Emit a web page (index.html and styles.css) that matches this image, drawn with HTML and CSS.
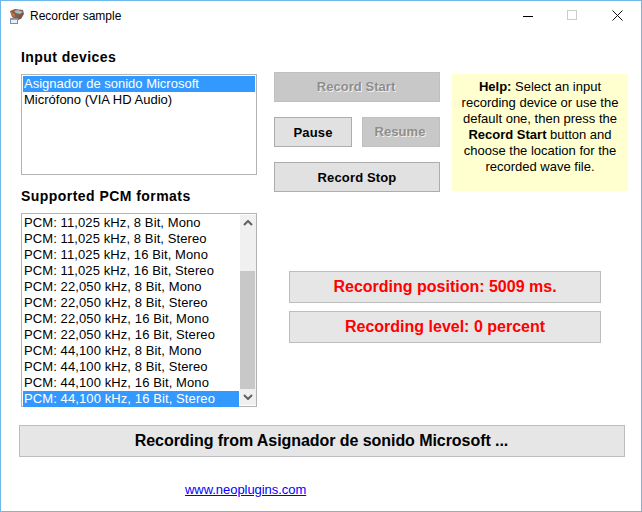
FILE: index.html
```html
<!DOCTYPE html>
<html lang="en">
<head>
<meta charset="utf-8">
<title>Recorder sample</title>
<link rel="stylesheet" href="styles.css">
</head>
<body>
<div class="window">
  <header class="titlebar">
    <svg class="app-icon" width="16" height="16" viewBox="0 0 16 16">
      <path d="M1 3l5-2 8 1 1 4-3 5-4 1-5-3z" fill="#8a5a44"/>
      <path d="M5 3l4-1 5 2-3 2-4-1z" fill="#9cc4c8"/>
      <path d="M1 3l5 3v3L3 8z" fill="#b5714a"/>
      <path d="M10 7l4-2-2 5-3 2z" fill="#6d5a55"/>
      <rect x="1.500" y="10.500" width="7" height="5" fill="#e8eef6" stroke="#7f8fa8"/>
      <rect x="2" y="11" width="6" height="1" fill="#8fa6c8"/>
    </svg>
    <span class="title">Recorder sample</span>
    <div class="controls">
      <span class="ctl"><svg width="10" height="10" viewBox="0 0 10 10"><path d="M0 5.500h10" stroke="#000" fill="none"/></svg></span>
      <span class="ctl"><svg width="11" height="11" viewBox="0 0 11 11"><rect x=".5" y=".5" width="9" height="9" stroke="#ccc" fill="none"/></svg></span>
      <span class="ctl"><svg width="11" height="11" viewBox="0 0 11 11"><path d="M.5.500l10 10M10.500.500l-10 10" stroke="#111" fill="none"/></svg></span>
    </div>
  </header>

  <main class="main">
    <section class="left">
      <h2 class="heading">Input devices</h2>
      <div class="listbox devices">
        <div class="item selected">Asignador de sonido Microsoft</div>
        <div class="item">Micrófono (VIA HD Audio)</div>
      </div>
      <h2 class="heading second">Supported PCM formats</h2>
      <div class="listbox formats">
        <div class="items">
          <div class="item">PCM: 11,025 kHz, 8 Bit, Mono</div>
          <div class="item">PCM: 11,025 kHz, 8 Bit, Stereo</div>
          <div class="item">PCM: 11,025 kHz, 16 Bit, Mono</div>
          <div class="item">PCM: 11,025 kHz, 16 Bit, Stereo</div>
          <div class="item">PCM: 22,050 kHz, 8 Bit, Mono</div>
          <div class="item">PCM: 22,050 kHz, 8 Bit, Stereo</div>
          <div class="item">PCM: 22,050 kHz, 16 Bit, Mono</div>
          <div class="item">PCM: 22,050 kHz, 16 Bit, Stereo</div>
          <div class="item">PCM: 44,100 kHz, 8 Bit, Mono</div>
          <div class="item">PCM: 44,100 kHz, 8 Bit, Stereo</div>
          <div class="item">PCM: 44,100 kHz, 16 Bit, Mono</div>
          <div class="item selected">PCM: 44,100 kHz, 16 Bit, Stereo</div>
        </div>
        <div class="scrollbar">
          <span class="arrow"><svg width="10" height="6" viewBox="0 0 10 6"><path d="M1 5l4-4 4 4" stroke="#606060" stroke-width="2" fill="none"/></svg></span>
          <span class="track"></span>
          <span class="thumb"></span>
          <span class="arrow"><svg width="10" height="6" viewBox="0 0 10 6"><path d="M1 1l4 4 4-4" stroke="#606060" stroke-width="2" fill="none"/></svg></span>
        </div>
      </div>
    </section>

    <section class="right">
      <div class="top">
        <div class="buttons">
          <button class="btn disabled" type="button">Record Start</button>
          <div class="btn-row">
            <button class="btn" type="button">Pause</button>
            <button class="btn disabled" type="button">Resume</button>
          </div>
          <button class="btn" type="button">Record Stop</button>
        </div>
        <aside class="help"><b>Help:</b> Select an input recording device or use the default one, then press the <b>Record Start</b> button and choose the location for the recorded wave file.</aside>
      </div>
      <div class="meters">
        <div class="panel meter">Recording position: 5009 ms.</div>
        <div class="panel meter">Recording level: 0 percent</div>
      </div>
    </section>
  </main>

  <div class="panel status">Recording from Asignador de sonido Microsoft ...</div>
  <footer class="footer"><a href="#">www.neoplugins.com</a></footer>
</div>
</body>
</html>
```
FILE: styles.css
```css
* { box-sizing: border-box; }
html, body { margin: 0; padding: 0; background: #fff; }
body { font-family: "Liberation Sans", Arial, sans-serif; color: #000; overflow: hidden; }

.window {
  width: 642px;
  height: 512px;
  border: 1px solid #6fb9ea;
  border-bottom-color: #7ab8e2;
  display: flex;
  flex-direction: column;
  background: #fff;
}

.titlebar {
  height: 29px;
  display: flex;
  align-items: center;
  padding-left: 8px;
  flex: none;
}
.app-icon { margin-right: 5px; }
.title { font-size: 12px; }
.controls { margin-left: auto; display: flex; margin-right: 1px; }
.ctl { width: 45px; display: flex; justify-content: center; align-items: center; height: 29px; }

.main { display: flex; padding-left: 20px; flex: none; }

.left { width: 236px; flex: none; }
.heading {
  font-size: 14px;
  font-weight: bold;
  letter-spacing: .45px;
  line-height: 16px;
  margin: 19px 0 9px;
}
.heading.second { margin: 13px 0 9px; }

.listbox {
  border: 1px solid #b4b4b4;
  font-size: 13px;
  background: #fff;
}
.devices { height: 101px; padding: 1px; }
.formats { height: 194px; padding: 1px 0 1px 1px; display: flex; letter-spacing: .1px; }
.items { flex: 1; min-width: 0; }
.item { height: 16px; line-height: 16px; padding-left: 1px; white-space: nowrap; }
.item.selected { background: #3399ff; color: #fff; }

.scrollbar {
  width: 16px;
  flex: none;
  display: flex;
  flex-direction: column;
  background: #f0f0f0;
  margin-left: 1px;
}
.arrow { height: 16px; display: flex; align-items: center; justify-content: center; flex: none; }
.track { height: 40px; flex: none; }
.thumb { flex: 1; background: #c8c8c8; margin-right: 1px; }

.right { margin-left: 17px; width: 354px; flex: none; padding-top: 42px; }
.top { display: flex; align-items: flex-start; }
.buttons { width: 166px; flex: none; display: flex; flex-direction: column; gap: 15px; }
.btn-row { display: flex; justify-content: space-between; }
.btn-row .btn { width: 78px; }
.btn {
  height: 30px;
  width: 100%;
  padding: 0;
  border: 1px solid #adadad;
  border-radius: 0;
  background: #e1e1e1;
  font-family: inherit;
  font-size: 13px;
  font-weight: bold;
  letter-spacing: .15px;
  color: #000;
}
.btn.disabled {
  padding: 0 2px 2px 0;
  background: #c8c8c8;
  border-color: #c0c0c0;
  color: #8e8e8e;
  letter-spacing: .05px;
  text-shadow: 1px 1px 0 #f0f0f0;
}
.help {
  width: 176px;
  height: 117px;
  margin: 2px 0 0 12px;
  padding: 5px 8px 0;
  background: #ffffd0;
  font-size: 13px;
  line-height: 16px;
  text-align: center;
}

.meters { margin: 79px 0 0 15px; width: 312px; display: flex; flex-direction: column; gap: 8px; }
.panel {
  border: 1px solid #bdbdbd;
  background: #e6e6e6;
  height: 32px;
  display: flex;
  align-items: center;
  justify-content: center;
  font-weight: bold;
}
.meter { color: #ff0000; font-size: 16px; }

.status {
  flex: none;
  width: 606px;
  margin: 18px 0 0 18px;
  padding-right: 1px;
  font-size: 16px;
  letter-spacing: -.06px;
}

.footer {
  flex: none;
  margin: 25px 0 0 184px;
  font-size: 13px;
  line-height: 16px;
  letter-spacing: -.05px;
}
.footer a { color: #0000ff; text-decoration: underline; }
```
